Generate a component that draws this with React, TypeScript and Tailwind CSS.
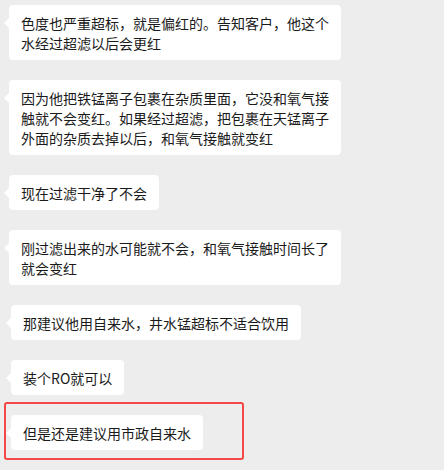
import React from "react";

interface Message {
    id: number;
    text: string;
    offset: "near" | "far";
    highlighted?: boolean;
}

const messages: Message[] = [
    { id: 1, text: "色度也严重超标，就是偏红的。告知客户，他这个水经过超滤以后会更红", offset: "near" },
    { id: 2, text: "因为他把铁锰离子包裹在杂质里面，它没和氧气接触就不会变红。如果经过超滤，把包裹在天锰离子外面的杂质去掉以后，和氧气接触就变红", offset: "near" },
    { id: 3, text: "现在过滤干净了不会", offset: "near" },
    { id: 4, text: "刚过滤出来的水可能就不会，和氧气接触时间长了就会变红", offset: "near" },
    { id: 5, text: "那建议他用自来水，井水锰超标不适合饮用", offset: "far" },
    { id: 6, text: "装个RO就可以", offset: "far" },
    { id: 7, text: "但是还是建议用市政自来水", offset: "far", highlighted: true }
];

const Bubble: React.FC<{ message: Message }> = ({ message }) => {
    return (
        <div className={`relative flex ${message.offset === "near" ? "ml-[9px]" : "ml-[11px]"}`}>
            {message.highlighted && (
                <div className="absolute -left-[7px] -top-[13px] w-[240px] h-[58px] border-[2.5px] border-[#f44848] rounded-[3px] pointer-events-none" />
            )}
            <div className="relative max-w-[332px] bg-white rounded-[4px] px-3 pt-2 pb-[7px] text-[14px] leading-[20px] text-[#1a1a1a]">
                <span className="absolute -left-[5px] top-[13px] w-0 h-0 border-y-[5px] border-y-transparent border-r-[5px] border-r-white" />
                {message.text}
            </div>
        </div>
    );
};

const App: React.FC = () => {
    return (
        <div
            className="w-[444px] h-[470px] overflow-hidden bg-[#ededed] pt-[5px] flex flex-col gap-5"
            style={{ fontFamily: '"Microsoft YaHei", "Noto Sans CJK SC", sans-serif' }}
        >
            {messages.map((message) => (
                <Bubble key={message.id} message={message} />
            ))}
        </div>
    );
};

export default App;
